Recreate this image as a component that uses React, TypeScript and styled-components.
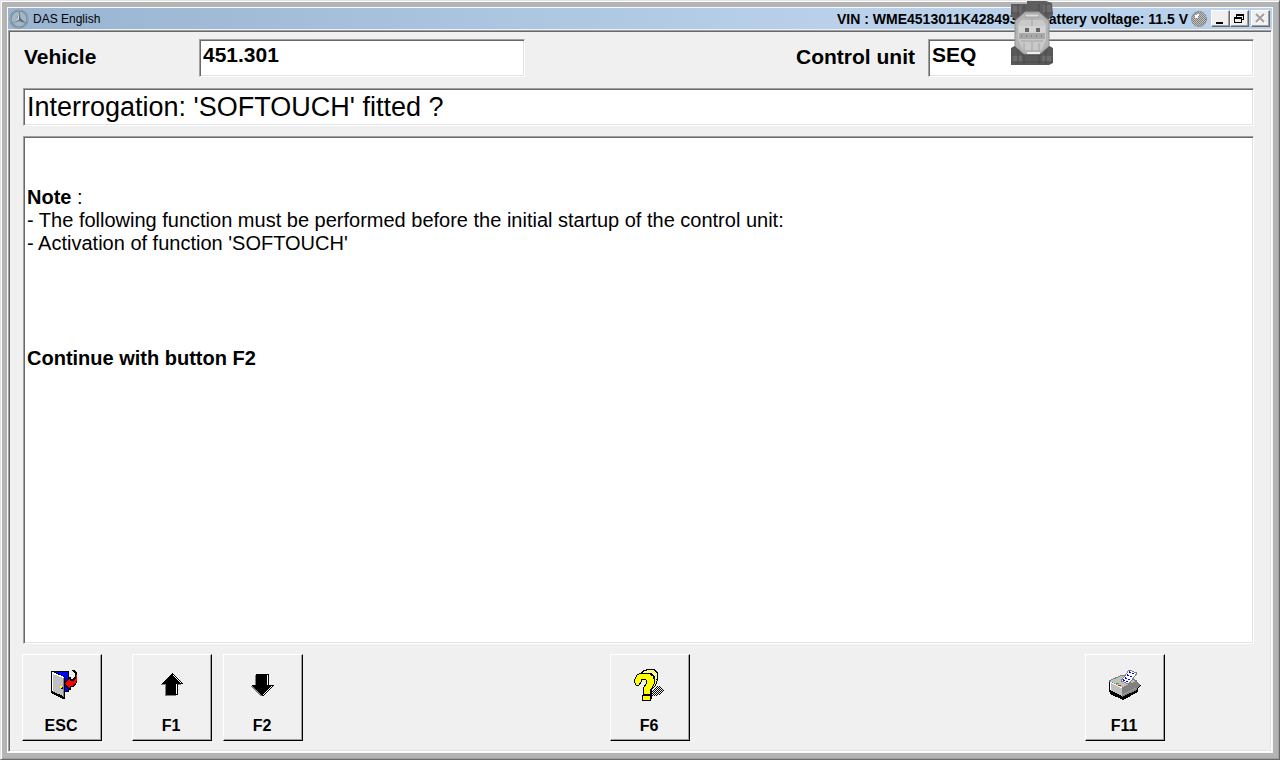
import React from 'react';
import styled, { createGlobalStyle, css } from 'styled-components';

const GlobalStyle = createGlobalStyle`
  *, *::before, *::after { box-sizing: border-box; }
  html, body, #root { height: 100%; }
  body { margin: 0; background: #b4b4b4; font-family: "Liberation Sans", Arial, sans-serif; color: #000; }
`;

const sunken = css`
  border: 1px solid;
  border-color: #a0a0a0 #fff #fff #a0a0a0;
  box-shadow: inset 1px 1px 0 #696969, inset -1px -1px 0 #e3e3e3;
`;

const WindowFrame = styled.div`
  display: flex;
  min-height: 100%;
  padding: 7px;
  background: #b4b4b4;
  border: 1px solid;
  border-color: #e3e3e3 #696969 #696969 #e3e3e3;
  box-shadow: inset 1px 1px 0 #fff, inset -1px -1px 0 #a0a0a0;
`;

const WindowBody = styled.div`
  flex: 1;
  display: flex;
  flex-direction: column;
  background: #f0f0f0;
  outline: 1px solid #f8f8f8;
`;

const TitleBar = styled.header`
  display: flex;
  align-items: center;
  height: 21px;
  padding: 0 2px 0 1px;
  background: linear-gradient(90deg, #99b4d1, #b9d1ea 66%);
`;

const Title = styled.h1`
  flex: 1;
  margin: 0 0 0 4px;
  font-size: 12px;
  font-weight: 400;
  line-height: 20px;
`;

const Status = styled.div`
  display: flex;
  gap: 21px;
  margin-right: 3px;
  font-size: 14px;
  font-weight: 700;
  line-height: 20px;
  white-space: nowrap;
`;

const WindowButtons = styled.div`
  display: flex;
  margin-left: 4px;
`;

const WindowButton = styled.button<{ $apart?: boolean }>`
  display: block;
  width: 19px;
  height: 17px;
  margin-left: ${p => (p.$apart ? 2 : 0)}px;
  padding: 0;
  background: #f0f0f0;
  border: 1px solid;
  border-color: #fff #696969 #696969 #fff;
  box-shadow: inset -1px -1px 0 #a0a0a0;
  svg { display: block; }
`;

const Panel = styled.main`
  ${sunken}
  flex: 1;
  display: flex;
  flex-direction: column;
  margin-top: 1px;
  padding: 8px 17px 10px 14px;
`;

const FieldRow = styled.div`
  display: flex;
  justify-content: space-between;
  margin-bottom: 11px;
`;

const Field = styled.div`
  display: flex;
  align-items: center;
`;

const FieldLabel = styled.label<{ $wide?: boolean }>`
  width: ${p => (p.$wide ? 176 : 133)}px;
  padding: 0 0 2px 1px;
  font-size: 21px;
  font-weight: 700;
  line-height: 24px;
`;

const FieldInput = styled.input`
  ${sunken}
  width: 326px;
  height: 38px;
  padding: 0 3px 6px;
  border-radius: 0;
  outline: 0;
  background: #fff;
  color: #000;
  font: 700 21px/24px "Liberation Sans", Arial, sans-serif;
`;

const Heading = styled.h2`
  ${sunken}
  height: 38px;
  margin: 0 0 10px;
  padding: 0 3px;
  background: #fff;
  font-size: 27px;
  font-weight: 400;
  line-height: 36px;
`;

const Message = styled.section`
  ${sunken}
  flex: 1;
  padding: 49px 3px 0;
  background: #fff;
  font-size: 20px;
  line-height: 23px;
  p { margin: 0; }
`;

const Continue = styled.p`
  && { margin-top: 92px; }
  font-weight: 700;
`;

const KeyBar = styled.nav`
  display: flex;
  margin: 10px 0 0 -1px;
  padding-right: 89px;
`;

const Space = styled.span<{ $grow: number }>`
  flex: ${p => p.$grow} 1 0;
`;

const KeyButton = styled.button<{ $before?: number }>`
  display: flex;
  flex-direction: column;
  align-items: center;
  justify-content: space-between;
  width: 80px;
  height: 87px;
  margin-left: ${p => p.$before ?? 0}px;
  padding: 13px 2px 4px 0;
  background: #f0f0f0;
  border: 1px solid;
  border-color: #fff #000 #000 #fff;
  box-shadow: inset -1px -1px 0 #a0a0a0;
  font: 700 16px/20px "Liberation Sans", Arial, sans-serif;
  color: #000;
`;

const Robot = styled.svg`
  position: absolute;
  top: 1px;
  right: 227px;
`;

const StarLogo = () => (
  <svg width="20" height="20" viewBox="0 0 20 20" aria-hidden="true">
    <circle cx="10" cy="10" r="8.5" fill="#a3b7cb" stroke="#75828c" strokeWidth="2" />
    <circle cx="10" cy="10" r="8.6" fill="none" stroke="#a9b4bb" strokeWidth=".7" />
    <path d="M10 2 11.3 9.2 16.5 14 10 11.8 3.5 14 8.7 9.2Z" fill="#5e6c77" stroke="#6f7c86" strokeWidth=".6" />
    <path d="M10 2v8.5L3.5 14l5.2-4.8Z" fill="#d5dde1" />
  </svg>
);

const Orb = () => (
  <svg width="16" height="16" viewBox="0 0 16 16" aria-hidden="true">
    <defs>
      <pattern id="orbDots" width="2" height="2" patternUnits="userSpaceOnUse">
        <path d="M0 0h1v1h-1zM1 1h1v1h-1z" fill="#808080" />
      </pattern>
    </defs>
    <circle cx="8" cy="8" r="7.5" fill="#c0c0c0" />
    <circle cx="8" cy="8" r="7.5" fill="url(#orbDots)" stroke="#808080" strokeDasharray="2 1" />
    <path d="M4 4h2v-1h2v2h-1v2h-3z" fill="#fff" />
  </svg>
);

const DoorIcon = () => (
  <svg width="32" height="32" viewBox="0 0 32 32" shapeRendering="crispEdges" aria-hidden="true">
    <path d="M6 3h18v21H6z" fill="#000" />
    <path d="M8 4h15v19H8z" fill="#00f" />
    <path d="M6 3h2l12 6v22h-2L6 25z" fill="#000" />
    <path d="M7 4l11 6v18L7 23z" fill="#c0c0c0" />
    <path d="M7 4h1l11 5v1h-1L8 6v17H7z" fill="#fff" />
    <path d="M18 10h1v19h-1z" fill="#808080" />
    <path d="M15 18h2v2h-2z" fill="#ff0" />
    <path d="M17 19h1v2h-2v-1h1z" fill="#000" />
    <path d="M27 2h2l3 3 1 3v4l-2 4-3 3h-2v3h-2l-5-6v-2l5-5h2v2h2l2-3V6z" fill="#000" />
    <path d="M31 7h1v5l-2 4-3 2h-2v3l-5-6 5-5v3h3l3-3z" fill="#f00" />
  </svg>
);

const ArrowIcon = ({ down = false }: { down?: boolean }) => (
  <svg width="32" height="32" viewBox="0 0 32 32" shapeRendering="crispEdges" aria-hidden="true">
    {down ? (
      <>
        <path d="M9 7h11v11h5L15 29 4 18h5z" fill="#808080" />
        <path d="M10 6h13v11h5L17 28 5 17h5z" fill="#000" />
        <path d="M21 7h1v10h-1zM25 18h1L17 27v-1z" fill="#fff" />
      </>
    ) : (
      <>
        <path d="M16 6 5 17h5v11h11V17h5z" fill="#808080" />
        <path d="M17 5 28 16h-5v11H11V16H6z" fill="#000" />
        <path d="M18 7 26 15h-1L17 7zM21 16h1v10h-1z" fill="#fff" />
      </>
    )}
  </svg>
);

const QuestionIcon = () => (
  <svg width="32" height="34" viewBox="0 0 32 34" shapeRendering="crispEdges" aria-hidden="true">
    <defs>
      <pattern id="shade" width="2" height="2" patternUnits="userSpaceOnUse">
        <path d="M0 0h1v1h-1zM1 1h1v1h-1z" fill="#000" />
      </pattern>
      <pattern id="shine" width="2" height="2" patternUnits="userSpaceOnUse">
        <path d="M0 0h2v2h-2z" fill="#ff0" />
        <path d="M0 0h1v1h-1zM1 1h1v1h-1z" fill="#fff" />
      </pattern>
    </defs>
    <path d="M19 23l4-5h5l3 4-3 4-5 2h-4z" fill="url(#shade)" />
    <path d="M7 5l4-3 3-1h7l4 4v7l-2 5-4 4v10l-3 2h-3V21l4-6V8H7z" fill="#000" />
    <path d="M9 5l3-2 3-1h6l3 4v5l-2 1V9l-3-4z" fill="url(#shine)" />
    <path d="M22 12h2l-2 5-4 4v-1l3-4z" fill="#ff0" />
    <path d="M18 22v6l-1 4v-9z" fill="#808000" />
    <path d="M1 13L4 7 8 5h8l4 3 1 3v5l-2 4-2 2v4h-7v-5l3-5 1-3-2-2h-3l-1 3-2 3H3z" fill="#ff0" stroke="#000" />
    <path d="M9 27h8v5H9z" fill="#ff0" stroke="#000" />
  </svg>
);

const PrinterIcon = () => (
  <svg width="34" height="32" viewBox="0 0 34 32" shapeRendering="crispEdges" aria-hidden="true">
    <path d="M2 13l2-1 26 2 4 3-3 3v4l-15 8L3 26l-1-4z" fill="#000" />
    <path d="M30 14l3 3-3 3z" fill="#808080" />
    <path d="M2 13l13-6 15 6-15 7z" fill="#c0c0c0" stroke="#808080" />
    <path d="M3 14l12 6v8L3 22z" fill="#c0c0c0" />
    <path d="M3 14v8M3 14l12 6" stroke="#fff" />
    <path d="M15 20l15-7v9l-15 7z" fill="#808080" />
    <path d="M15 27l14-7" stroke="#a0a0a0" />
    <path d="M14 13l8-11 8 3-8 11z" fill="#fff" stroke="#808080" />
    <path d="M22 4l5 2M20 7l5 2M18 10l5 2M16 12l5 2" stroke="#00f" strokeWidth="1.500" strokeDasharray="2 1" />
    <path d="M9 15h3v1H9z" fill="#0d0" />
    <path d="M11 17h3v1h-3z" fill="#f00" />
  </svg>
);

const RobotSprite = () => (
  <Robot width="42" height="66" viewBox="0 0 42 66" aria-hidden="true">
    <path d="M16 0h19l6 2 1 12-8 8H8L0 15V3h16z" fill="#5e5e5e" />
    <path d="M0 47l7-4h28l7 4v15l-4 2H0z" fill="#595959" />
    <path d="M2 5h8v8H2zM32 4h8v8h-8zM2 53h9v8H2zM31 53h9v8h-9z" fill="#6c6c6c" />
    <path d="M7 3v13M13 3v7M28 3v7M35 3v13M7 48v15M13 54v9M28 54v9M35 48v15M0 54h42M0 61h42M0 12h9M33 12h9" stroke="#4a4a4a" />
    <path d="M14 11h14l10 9v25l-9 8H13L4 45V20z" fill="#b4b4b4" stroke="#929292" />
    <path d="M10 19h22l3 5v14l-4 11H12L7 38V24z" fill="#c9c9c9" />
    <path d="M14 13h14v3H14zM10 40h22M13 42v8M28 42v8M21 18v7M21 41v9" fill="#ddd" stroke="#a4a4a4" />
    <path d="M8 25h26v7H8z" fill="#d4d4d4" />
    <path d="M14 27h4v4h-4zM25 27h4v4h-4z" fill="#686868" />
    <path d="M8 32h26v6H8z" fill="#a8a8a8" />
    <path d="M10 35h22" stroke="#6c926c" strokeWidth="2" strokeDasharray="1 4" />
    <path d="M16 52h13" stroke="#eee" strokeWidth="2" />
  </Robot>
);

export default function App() {
  return (
    <>
      <GlobalStyle />
      <WindowFrame>
        <WindowBody>
          <TitleBar>
            <StarLogo />
            <Title>DAS English</Title>
            <Status>
              <span>VIN : WME4513011K428493</span>
              <span>Battery voltage: 11.5 V</span>
            </Status>
            <Orb />
            <WindowButtons>
              <WindowButton type="button" aria-label="Minimize">
                <svg width="17" height="15" viewBox="0 0 17 15"><path d="M4 11h7v2H4z" /></svg>
              </WindowButton>
              <WindowButton type="button" aria-label="Restore">
                <svg width="17" height="15" viewBox="0 0 17 15" shapeRendering="crispEdges">
                  <path d="M5 3h8v6h-2v-1h1v-3h-6v1h-1zM3 6h8v6H3zM4 8v3h6V8z" fillRule="evenodd" />
                </svg>
              </WindowButton>
              <WindowButton type="button" aria-label="Close" $apart>
                <svg width="17" height="15" viewBox="0 0 17 15">
                  <path d="M5 4l8 8M13 4l-8 8" stroke="#fff" strokeWidth="2" />
                  <path d="M4 3l8 8M12 3l-8 8" stroke="#a0a0a0" strokeWidth="2" />
                </svg>
              </WindowButton>
            </WindowButtons>
          </TitleBar>
          <Panel>
            <FieldRow>
              <Field>
                <FieldLabel htmlFor="vehicle" $wide>Vehicle</FieldLabel>
                <FieldInput id="vehicle" readOnly defaultValue="451.301" />
              </Field>
              <Field>
                <FieldLabel htmlFor="unit">Control unit</FieldLabel>
                <FieldInput id="unit" readOnly defaultValue="SEQ" />
              </Field>
            </FieldRow>
            <Heading>Interrogation: 'SOFTOUCH' fitted ?</Heading>
            <Message>
              <p><b>Note</b> :</p>
              <p>- The following function must be performed before the initial startup of the control unit:</p>
              <p>- Activation of function 'SOFTOUCH'</p>
              <Continue>Continue with button F2</Continue>
            </Message>
            <KeyBar>
              <KeyButton type="button"><DoorIcon />ESC</KeyButton>
              <KeyButton type="button" $before={30}><ArrowIcon />F1</KeyButton>
              <KeyButton type="button" $before={11}><ArrowIcon down />F2</KeyButton>
              <Space $grow={307} />
              <KeyButton type="button"><QuestionIcon />F6</KeyButton>
              <Space $grow={395} />
              <KeyButton type="button"><PrinterIcon />F11</KeyButton>
            </KeyBar>
          </Panel>
        </WindowBody>
      </WindowFrame>
      <RobotSprite />
    </>
  );
}
